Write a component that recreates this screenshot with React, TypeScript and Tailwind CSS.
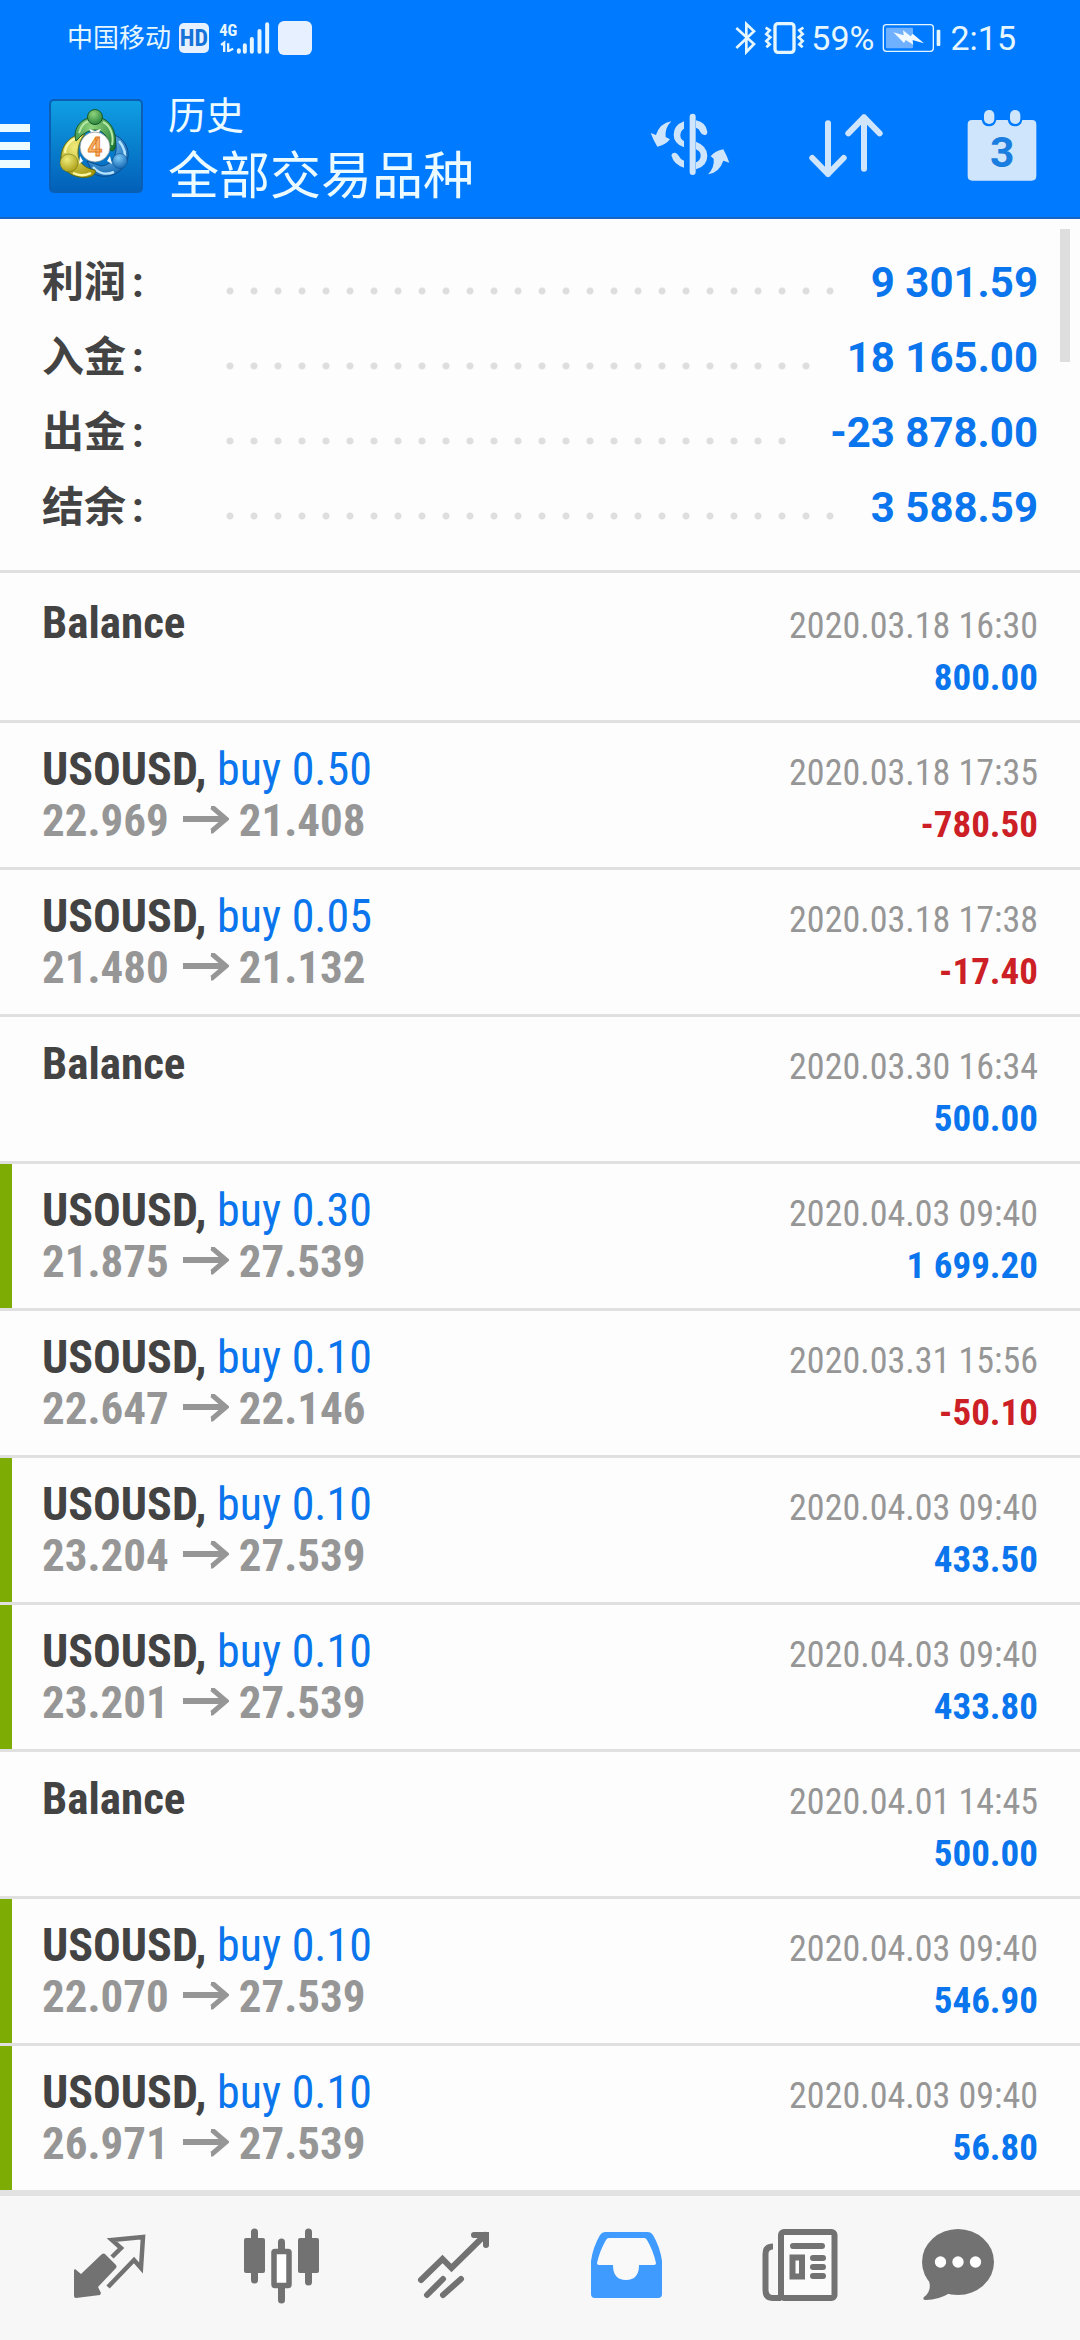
import { ReactNode } from "react";

type Deal = {
  symbol?: string;
  side?: string;
  open?: string;
  close?: string;
  time: string;
  profit: string;
  closedByTp?: boolean;
};

const summary = [
  { label: "利润", value: "9 301.59" },
  { label: "入金", value: "18 165.00" },
  { label: "出金", value: "-23 878.00" },
  { label: "结余", value: "3 588.59" },
];

const deals: Deal[] = [
  { time: "2020.03.18 16:30", profit: "800.00" },
  { symbol: "USOUSD", side: "buy 0.50", open: "22.969", close: "21.408", time: "2020.03.18 17:35", profit: "-780.50" },
  { symbol: "USOUSD", side: "buy 0.05", open: "21.480", close: "21.132", time: "2020.03.18 17:38", profit: "-17.40" },
  { time: "2020.03.30 16:34", profit: "500.00" },
  { symbol: "USOUSD", side: "buy 0.30", open: "21.875", close: "27.539", time: "2020.04.03 09:40", profit: "1 699.20", closedByTp: true },
  { symbol: "USOUSD", side: "buy 0.10", open: "22.647", close: "22.146", time: "2020.03.31 15:56", profit: "-50.10" },
  { symbol: "USOUSD", side: "buy 0.10", open: "23.204", close: "27.539", time: "2020.04.03 09:40", profit: "433.50", closedByTp: true },
  { symbol: "USOUSD", side: "buy 0.10", open: "23.201", close: "27.539", time: "2020.04.03 09:40", profit: "433.80", closedByTp: true },
  { time: "2020.04.01 14:45", profit: "500.00" },
  { symbol: "USOUSD", side: "buy 0.10", open: "22.070", close: "27.539", time: "2020.04.03 09:40", profit: "546.90", closedByTp: true },
  { symbol: "USOUSD", side: "buy 0.10", open: "26.971", close: "27.539", time: "2020.04.03 09:40", profit: "56.80", closedByTp: true },
];

const StatusBar = () => (
  <div className="flex h-[75px] items-center justify-between pl-[67px] pr-16 text-[#e6f6ff]">
    <div className="flex items-center">
      <span className="text-[26px] leading-8">中国移动</span>
      <span className="ml-2 flex h-[30px] w-[30px] items-center justify-center rounded-[5px] bg-[#e6f0ff] font-['Roboto_Condensed'] text-[24px] font-bold text-[#1472d8]">
        HD
      </span>
      <svg width="51" height="34" viewBox="478 31 152 102" className="ml-2.5" fill="#e6f6ff" stroke="#e6f6ff">
        <text x="478" y="75" fontSize="50" fontWeight="700" stroke="none" fontFamily="Roboto Condensed">4G</text>
        <path d="M484 103l9-7v28M505 98v26M505 122l15-8" fill="none" strokeWidth="7" />
        <path d="M537 119v4M555 104v19M576 85v38M599 61v62M622 41v82" strokeWidth="12" strokeLinecap="round" />
      </svg>
      <span className="ml-2 h-[34px] w-[34px] rounded-[6px] bg-[#e6f0ff]" />
    </div>

    <div className="flex items-center text-[34px] leading-10">
      <svg width="21" height="34" viewBox="342 61 63 102" fill="none" stroke="#e6f6ff" strokeWidth="8">
        <path d="M346 82l53 48-23 24V70l23 22-53 50" />
      </svg>
      <svg width="41" height="34" viewBox="435 61 123 102" fill="none" stroke="#e6f6ff" className="ml-2">
        <rect x="468" y="69" width="57" height="86" rx="9" strokeWidth="10" />
        <path d="M440 81l12 8-10 11 12 10-12 11 10 10-10 9M553 81l-12 8 10 11-12 10 12 11-10 10 10 9" strokeWidth="8" />
      </svg>
      <span className="ml-1.5">59%</span>
      <svg width="60" height="30" viewBox="787 68 180 90" className="ml-2">
        <rect x="791" y="73" width="150" height="80" rx="9" fill="none" stroke="#e6f6ff" strokeWidth="4" />
        <rect x="799" y="82" width="81" height="62" rx="3" fill="#6fb0ff" />
        <rect x="951" y="88" width="11" height="49" rx="3" fill="#e6f6ff" />
        <path d="M821 96l31 9-2-15 23 18 6-8 34 29-35-10 3 14-23-14-5 9z" fill="#f2faff" />
      </svg>
      <span className="ml-2">2:15</span>
    </div>
  </div>
);

const Logo = () => (
  <svg width="94" height="94" viewBox="0 0 94 94">
    <defs>
      <linearGradient id="tile" x1="0" y1="0" x2="0" y2="1">
        <stop offset="0" stopColor="#0f9fe4" />
        <stop offset="1" stopColor="#0260b8" />
      </linearGradient>
      <radialGradient id="green" cx="0.4" cy="0.3" r="0.8">
        <stop offset="0" stopColor="#8ed37c" />
        <stop offset="1" stopColor="#1d7a35" />
      </radialGradient>
      <radialGradient id="yellow" cx="0.4" cy="0.3" r="0.8">
        <stop offset="0" stopColor="#f0ec7a" />
        <stop offset="1" stopColor="#a3950c" />
      </radialGradient>
      <radialGradient id="blue" cx="0.4" cy="0.3" r="0.8">
        <stop offset="0" stopColor="#7cc8f5" />
        <stop offset="1" stopColor="#0a5fae" />
      </radialGradient>
    </defs>
    <rect x="1" y="1" width="92" height="92" rx="4" fill="url(#tile)" stroke="#0a5fb4" strokeWidth="2" />
    <path d="M65 36C75 39 82 51 78 62C73 75 56 82 44 74L38 62L52 67C64 66 71 54 65 36Z" fill="url(#blue)" stroke="#0a4c8c" />
    <path d="M70 42C76 49 77 56 75 62M44 68C50 75 58 76 65 73" fill="none" stroke="#b5e2fb" strokeWidth="2.5" />
    <path d="M36 35C20 35 11 48 12 62C14 74 30 82 43 77C46 75 47 73 46 71C37 70 29 64 29 54C29 46 32 40 36 35Z" fill="url(#yellow)" stroke="#5b6a14" />
    <path d="M32 38C22 39 16 47 16 54M24 74C30 77 36 77 42 74" fill="none" stroke="#fbf6a2" strokeWidth="2.5" />
    <path d="M27 42C23 29 33 18 46 18S69 30 66 49C65 52 63 53 60 50C60 38 54 31 46 31C40 31 36 34 33 36Z" fill="url(#green)" stroke="#15592b" />
    <path d="M30 34C32 26 37 22 41 22M54 23C62 27 65 37 63 46" fill="none" stroke="#b6e9a6" strokeWidth="2" />
    <circle cx="46" cy="18" r="7.5" fill="url(#green)" stroke="#15592b" />
    <circle cx="20" cy="64" r="9" fill="url(#yellow)" stroke="#5b6a14" strokeWidth="0.5" />
    <circle cx="71" cy="62" r="7.5" fill="url(#blue)" stroke="#0a4c8c" strokeWidth="0.5" />
    <path d="M40 30l6 2 6-2-3 5h-6zM31 57l3 5-4 3zM61 57l-3 5 5 3z" fill="#fff" />
    <circle cx="46" cy="48" r="15" fill="#fff" stroke="#7d8b8b" strokeWidth="0.7" />
    <text x="46" y="57" textAnchor="middle" fontSize="26" fontWeight="700" fontFamily="Roboto" fill="#f7b267" stroke="#e0781c" strokeWidth="0.8">4</text>
  </svg>
);

const HeaderButton = ({ label, children }: { label: string; children: ReactNode }) => (
  <button type="button" aria-label={label} className="flex w-[156px] items-center justify-center">
    {children}
  </button>
);

const Header = () => (
  <header className="border-b-2 border-[#1a66c4] bg-[#007aff]">
    <StatusBar />
    <div className="flex h-[142px] items-center">
      <button type="button" aria-label="菜单" className="flex flex-col gap-2.5">
        <span className="block h-2 w-[30px] bg-[#ecfbff]" />
        <span className="block h-2 w-[30px] bg-[#ecfbff]" />
        <span className="block h-2 w-[30px] bg-[#ecfbff]" />
      </button>
      <div className="ml-[19px]">
        <Logo />
      </div>
      <div className="ml-[25px] flex-1 pt-4 text-[#ecfbff]">
        <p className="text-[38px] leading-[46px]">历史</p>
        <h1 className="text-[51px] leading-[76px]">全部交易品种</h1>
      </div>
      <HeaderButton label="货币">
        <svg width="80" height="80" viewBox="90 320 240 240" fill="#cfe5fb">
          <path d="M218 352v166" stroke="#cfe5fb" strokeWidth="18" strokeLinecap="round" />
          <path d="M192 366v22q-11 7-11 20t11 17v19q-31-11-31-38 0-28 31-40z" />
          <path d="M228 363q30 6 34 34 0 10-9 10-8 0-12-9-3-10-13-13z" />
          <path d="M228 427q34 13 34 42 0 31-34 41v-21q14-7 14-20t-14-19z" />
          <path d="M154 468q2-9 11-8 7 1 11 9 4 10 16 15v21q-31-9-38-37z" />
          <path d="M154 366q-20 20-17 47l13 7q-13 17-38 22-12-20-20-41l16 6q12-36 46-41z" />
          <path d="M264 525q20-20 17-47l-9-7q13-16 38-21 11 20 18 40l-18-6q-12 36-46 41z" />
        </svg>
      </HeaderButton>
      <HeaderButton label="排序">
        <svg width="80" height="80" viewBox="558 320 240 240" fill="none" stroke="#cfe5fb" strokeWidth="18" strokeLinecap="round" strokeLinejoin="round">
          <path d="M624 372v152M577 476l47 48 47-48" />
          <path d="M732 508V354M685 402l47-48 47 48" />
        </svg>
      </HeaderButton>
      <HeaderButton label="日期">
        <svg width="80" height="80" viewBox="1026 320 240 240" fill="#cfe5fb">
          <path d="M1056 362h29q4 19 22 19t22-19h34q4 19 22 19t22-19h29q13 0 13 13v155q0 14-14 14h-178q-14 0-14-14v-155q0-13 13-13z" />
          <rect x="1092" y="332" width="31" height="42" rx="15" />
          <rect x="1170" y="332" width="31" height="42" rx="15" />
          <text x="1147" y="504" textAnchor="middle" fontSize="128" fontWeight="700" fontFamily="Roboto" fill="#1a7de0">3</text>
        </svg>
      </HeaderButton>
    </div>
  </header>
);

const Summary = () => (
  <section className="relative border-b-[3px] border-[#e0e0e0] pb-[25px] pl-[42px] pr-[42px] pt-[26px]">
    <dl>
      {summary.map((row) => (
        <div key={row.label} className="flex h-[75px] items-center text-[42px] font-bold">
          <dt className="flex w-[176px] gap-1.5 text-[#434343]">
            {row.label}
            <span>:</span>
          </dt>
          {/* dotted leader, clipped before the value */}
          <div className="mr-9 mt-4 h-6 flex-1 bg-[radial-gradient(circle,#dedede_3px,transparent_4px)] bg-[length:24px_24px] bg-left" />
          <dd className="text-[#0a75ec]">{row.value}</dd>
        </div>
      ))}
    </dl>
    <div className="absolute right-2.5 top-2.5 h-[133px] w-2.5 bg-[#dedede]" />
  </section>
);

const Arrow = () => (
  <svg width="46" height="30" viewBox="0 0 46 30" fill="none" stroke="#969696" className="ml-3.5 mr-2.5 inline-block align-baseline">
    <path d="M0 13h42" strokeWidth="6" />
    <path d="M28 1h1l14 12-14 12h-1" strokeWidth="5" />
  </svg>
);

const DealRow = ({ deal }: { deal: Deal }) => {
  const profitColor = deal.profit.startsWith("-") ? "text-[#cc1f26]" : "text-[#0a75ec]";

  return (
    <li className="flex border-b-[3px] border-[#e0e0e0] font-['Roboto_Condensed'] last:border-b-0">
      <div className={deal.closedByTp ? "w-3 bg-[#7dad05]" : "w-3"} />
      <div className="flex flex-1 justify-between pl-[30px] pr-[42px]">
        <div className="py-[21px] leading-[51px]">
          {deal.symbol ? (
            <>
              <p className="text-[46px]">
                <span className="font-bold text-[#434343]">{deal.symbol},</span>{" "}
                <span className="text-[#0a75ec]">{deal.side}</span>
              </p>
              <p className="text-[45px] font-bold text-[#969696]">
                {deal.open}
                <Arrow />
                {deal.close}
              </p>
            </>
          ) : (
            <p className="text-[45px] font-bold text-[#434343]">Balance</p>
          )}
        </div>
        <div className="pb-[17px] pt-[25px] text-right leading-[51px]">
          <p className="text-[36px] text-[#969696]">{deal.time}</p>
          <p className={`text-[37px] font-bold ${profitColor}`}>{deal.profit}</p>
        </div>
      </div>
    </li>
  );
};

const TabLink = ({ label, children }: { label: string; children: ReactNode }) => (
  <a href="#" aria-label={label} className="flex flex-1 items-center justify-center">
    {children}
  </a>
);

const TabBar = () => (
  <nav className="flex h-[150px] border-t-[6px] border-[#e2e2e2] bg-[#f7f7f7] px-6">
    <TabLink label="行情">
      <svg width="80" height="80" viewBox="0 0 80 80">
        <path d="M5 41L11 46L32 26Q34 25 35 26L46 37Q47 39 46 40L28 59L31 65L30 67L6 70Q4 70 4 68V42Z" fill="#727272" />
        <path d="M42 29L51 20L42 12L73 9L71 40L64 32L38 59" fill="none" stroke="#727272" strokeWidth="4.5" />
      </svg>
    </TabLink>
    <TabLink label="图表">
      <svg width="80" height="80" viewBox="0 0 80 80" fill="#727272">
        <path d="M12.5 4v48M39.5 14v10M39.5 58v14M66.5 4v50" stroke="#727272" strokeWidth="7" strokeLinecap="round" />
        <rect x="2" y="10" width="21" height="35" rx="2" />
        <rect x="56" y="10" width="21" height="35" rx="2" />
        <rect x="32" y="23.5" width="15" height="34" rx="1" fill="#fff" stroke="#727272" strokeWidth="5.5" />
      </svg>
    </TabLink>
    <TabLink label="交易">
      <svg width="80" height="80" viewBox="0 0 80 80" fill="none" stroke="#727272" strokeWidth="6" strokeLinecap="round">
        <path d="M7 52L28.5 31L37.5 40L71 7M60 7H72V17" />
        <path d="M29 51L13 67M47 51L29 67" />
      </svg>
    </TabLink>
    <TabLink label="历史">
      <svg width="80" height="80" viewBox="0 0 80 80">
        <path d="M19 4H62Q65 4 67 7Q74 19 76 33V66Q76 70 72 70H9Q5 70 5 66V33Q7 19 14 7Q16 4 19 4Z" fill="#3f9bff" />
        <path d="M23 10H58Q60 10 61 12Q67 22 70 35Q70 37 68 37H53Q53 52 40 52T27 37H13Q11 37 11 35Q14 22 20 12Q21 10 23 10Z" fill="#f9f9f9" />
      </svg>
    </TabLink>
    <TabLink label="新闻">
      <svg width="80" height="80" viewBox="0 0 80 80" fill="none" stroke="#727272" strokeWidth="6">
        <rect x="23" y="4" width="53.5" height="66" rx="3" fill="#fbfbfb" />
        <path d="M15 18.5Q7.5 18.5 7.5 26V62Q7.5 70 15 70H23" />
        <path d="M35 18H64M55 30H65M55 39H65M55 48H65" strokeLinecap="round" />
        <rect x="34.5" y="29.5" width="9.5" height="19" />
      </svg>
    </TabLink>
    <TabLink label="聊天">
      <svg width="80" height="80" viewBox="0 0 80 80" className="overflow-visible">
        <ellipse cx="28" cy="34" rx="36" ry="33" fill="#727272" />
        <path d="M-1 53Q2 63-6 69Q-8 72-4 72Q8 72 20 65Z" fill="#727272" />
        <circle cx="10.5" cy="34" r="5.7" fill="#fff" />
        <circle cx="28" cy="34" r="5.7" fill="#fff" />
        <circle cx="45.5" cy="34" r="5.7" fill="#fff" />
      </svg>
    </TabLink>
  </nav>
);

export default function App() {
  return (
    <div className="flex min-h-screen flex-col bg-[#fdfdfd] font-['Roboto','Noto_Sans_CJK_SC',sans-serif]">
      <Header />
      <main className="flex-1">
        <Summary />
        <ul className="pt-[3px]">
          {deals.map((deal, index) => (
            <DealRow key={index} deal={deal} />
          ))}
        </ul>
      </main>
      <TabBar />
    </div>
  );
}
